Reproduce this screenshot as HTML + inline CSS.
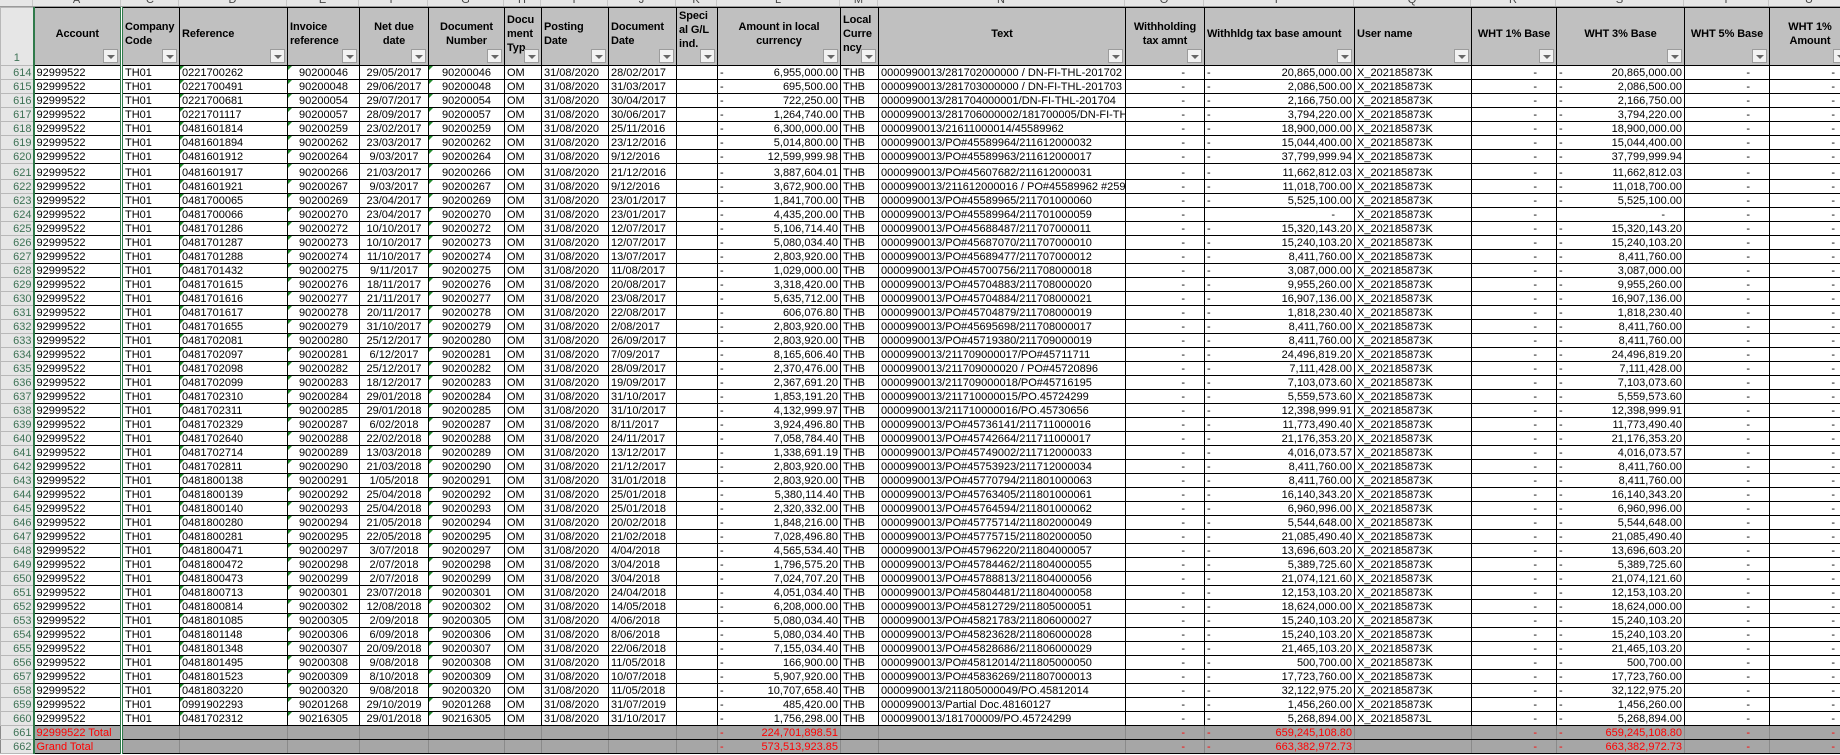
<!DOCTYPE html>
<html><head><meta charset="utf-8"><style>
*{box-sizing:border-box}
body{margin:0;width:1840px;height:755px;overflow:hidden;background:#fff;font-family:"Liberation Sans",Arial,sans-serif;font-size:11px;color:#000;position:relative}
.let{position:absolute;top:0;left:0;height:7px;width:1850px;background:#e6e6e6;overflow:hidden;border-bottom:1px solid #9a9a9a}
.let span{position:absolute;top:-6px;font-size:11px;color:#444;text-align:center;border-right:1px solid #c8c8c8;height:14px}
table{position:absolute;top:7px;left:0;border-collapse:collapse;table-layout:fixed;width:1850px}
td{border:1px solid #000;padding:0 2px;white-space:nowrap;overflow:hidden;line-height:12px;height:14px;vertical-align:bottom}
td:first-child{background:#e6e6e6;color:#3d7255;text-align:right;border-color:#b8b8b8;border-right:1px solid #9a9a9a;padding:0 1px 0 0}
td:nth-child(2){border-left:2px solid #2f7a4a}
td:nth-child(3){border-left:3px double #2f7a4a}
thead td{background:#c0c0c0;font-weight:bold;white-space:normal;line-height:14px;height:58px;vertical-align:middle;position:relative;padding:0 2px 6px 2px;letter-spacing:-0.1px}
thead td:first-child{vertical-align:bottom;font-weight:normal;text-align:center;padding:0}
thead td.c{text-align:center}
.fb{position:absolute;right:2px;bottom:2px;width:15px;height:14px;background:#f2f2f2;border:1px solid #9c9c9c}
.fb:after{content:"";position:absolute;left:3px;top:5px;border-left:4px solid transparent;border-right:4px solid transparent;border-top:4px solid #666}
tbody td:nth-child(5),tbody td:nth-child(6),tbody td:nth-child(7){text-align:center}
tbody td:nth-child(12),tbody td:nth-child(16),tbody td:nth-child(19){text-align:right}
tbody td:nth-child(15),tbody td:nth-child(18),tbody td:nth-child(20){text-align:right;padding-right:19px}
tbody td:nth-child(21){text-align:right;padding-right:15px}
i{font-style:normal;float:left}
tbody tr.d td:nth-child(4),tbody tr.d td:nth-child(5),tbody tr.d td:nth-child(7){position:relative}
tbody tr.d td:nth-child(4):before,tbody tr.d td:nth-child(5):before,tbody tr.d td:nth-child(7):before{content:"";position:absolute;left:0;top:0;border-top:4px solid #1f8a2a;border-right:4px solid transparent}
tr.t td{background:#a6a6a6;color:#f00;border-left-color:#8a8a8a;border-right-color:#8a8a8a}
tr.t td:first-child{background:#e6e6e6;color:#3d7255}
tr.t td:nth-child(2){border-left:2px solid #2f7a4a}
tr.t td:nth-child(3){border-left:3px double #2f7a4a}
</style></head><body>
<div class="let">
<span style="left:0;width:33px"></span><span style="left:33px;width:88px">A</span><span style="left:122px;width:57px">C</span><span style="left:179px;width:108px">D</span><span style="left:287px;width:72px">E</span><span style="left:359px;width:69px">F</span><span style="left:428px;width:76px">G</span><span style="left:504px;width:37px">H</span><span style="left:541px;width:67px">I</span><span style="left:608px;width:68px">J</span><span style="left:676px;width:41px">K</span><span style="left:717px;width:123px">L</span><span style="left:840px;width:38px">M</span><span style="left:878px;width:247px">N</span><span style="left:1125px;width:79px">O</span><span style="left:1204px;width:150px">P</span><span style="left:1354px;width:117px">Q</span><span style="left:1471px;width:85px">R</span><span style="left:1556px;width:128px">S</span><span style="left:1684px;width:85px">T</span><span style="left:1769px;width:81px">U</span>
</div>
<table>
<colgroup><col style="width:33px"><col style="width:88px"><col style="width:58px"><col style="width:108px"><col style="width:72px"><col style="width:69px"><col style="width:76px"><col style="width:37px"><col style="width:67px"><col style="width:68px"><col style="width:41px"><col style="width:123px"><col style="width:38px"><col style="width:247px"><col style="width:79px"><col style="width:150px"><col style="width:117px"><col style="width:85px"><col style="width:128px"><col style="width:85px"><col style="width:81px"></colgroup>
<thead><tr>
<td>1</td>
<td class="c">Account<div class="fb"></div></td>
<td>Company Code<div class="fb"></div></td>
<td>Reference<div class="fb"></div></td>
<td>Invoice reference<div class="fb"></div></td>
<td class="c">Net due date<div class="fb"></div></td>
<td class="c">Document Number<div class="fb"></div></td>
<td>Docu ment Typ<div class="fb"></div></td>
<td>Posting Date<div class="fb"></div></td>
<td>Document Date<div class="fb"></div></td>
<td style="padding-bottom:14px">Speci al G/L ind.<div class="fb"></div></td>
<td class="c">Amount in local currency<div class="fb"></div></td>
<td>Local Curre ncy<div class="fb"></div></td>
<td class="c">Text<div class="fb"></div></td>
<td class="c">Withholding tax amnt<div class="fb"></div></td>
<td>Withhldg tax base amount<div class="fb"></div></td>
<td>User name<div class="fb"></div></td>
<td class="c">WHT 1% Base<div class="fb"></div></td>
<td class="c">WHT 3% Base<div class="fb"></div></td>
<td class="c">WHT 5% Base<div class="fb"></div></td>
<td class="c">WHT 1% Amount<div class="fb"></div></td>
</tr></thead>
<tbody>
<tr class="d"><td>614</td><td>92999522</td><td>TH01</td><td>0221700262</td><td>90200046</td><td>29/05/2017</td><td>90200046</td><td>OM</td><td>31/08/2020</td><td>28/02/2017</td><td></td><td><i>-</i>6,955,000.00</td><td>THB</td><td>0000990013/281702000000 / DN-FI-THL-201702</td><td>-</td><td><i>-</i>20,865,000.00</td><td>X_202185873K</td><td>-</td><td><i>-</i>20,865,000.00</td><td>-</td><td>-</td></tr>
<tr class="d"><td>615</td><td>92999522</td><td>TH01</td><td>0221700491</td><td>90200048</td><td>29/06/2017</td><td>90200048</td><td>OM</td><td>31/08/2020</td><td>31/03/2017</td><td></td><td><i>-</i>695,500.00</td><td>THB</td><td>0000990013/281703000000 / DN-FI-THL-201703</td><td>-</td><td><i>-</i>2,086,500.00</td><td>X_202185873K</td><td>-</td><td><i>-</i>2,086,500.00</td><td>-</td><td>-</td></tr>
<tr class="d"><td>616</td><td>92999522</td><td>TH01</td><td>0221700681</td><td>90200054</td><td>29/07/2017</td><td>90200054</td><td>OM</td><td>31/08/2020</td><td>30/04/2017</td><td></td><td><i>-</i>722,250.00</td><td>THB</td><td>0000990013/281704000001/DN-FI-THL-201704</td><td>-</td><td><i>-</i>2,166,750.00</td><td>X_202185873K</td><td>-</td><td><i>-</i>2,166,750.00</td><td>-</td><td>-</td></tr>
<tr class="d"><td>617</td><td>92999522</td><td>TH01</td><td>0221701117</td><td>90200057</td><td>28/09/2017</td><td>90200057</td><td>OM</td><td>31/08/2020</td><td>30/06/2017</td><td></td><td><i>-</i>1,264,740.00</td><td>THB</td><td>0000990013/281706000002/181700005/DN-FI-THL</td><td>-</td><td><i>-</i>3,794,220.00</td><td>X_202185873K</td><td>-</td><td><i>-</i>3,794,220.00</td><td>-</td><td>-</td></tr>
<tr class="d"><td>618</td><td>92999522</td><td>TH01</td><td>0481601814</td><td>90200259</td><td>23/02/2017</td><td>90200259</td><td>OM</td><td>31/08/2020</td><td>25/11/2016</td><td></td><td><i>-</i>6,300,000.00</td><td>THB</td><td>0000990013/21611000014/45589962</td><td>-</td><td><i>-</i>18,900,000.00</td><td>X_202185873K</td><td>-</td><td><i>-</i>18,900,000.00</td><td>-</td><td>-</td></tr>
<tr class="d"><td>619</td><td>92999522</td><td>TH01</td><td>0481601894</td><td>90200262</td><td>23/03/2017</td><td>90200262</td><td>OM</td><td>31/08/2020</td><td>23/12/2016</td><td></td><td><i>-</i>5,014,800.00</td><td>THB</td><td>0000990013/PO#45589964/211612000032</td><td>-</td><td><i>-</i>15,044,400.00</td><td>X_202185873K</td><td>-</td><td><i>-</i>15,044,400.00</td><td>-</td><td>-</td></tr>
<tr class="d"><td>620</td><td>92999522</td><td>TH01</td><td>0481601912</td><td>90200264</td><td>9/03/2017</td><td>90200264</td><td>OM</td><td>31/08/2020</td><td>9/12/2016</td><td></td><td><i>-</i>12,599,999.98</td><td>THB</td><td>0000990013/PO#45589963/211612000017</td><td>-</td><td><i>-</i>37,799,999.94</td><td>X_202185873K</td><td>-</td><td><i>-</i>37,799,999.94</td><td>-</td><td>-</td></tr>
<tr class="d" style="height:16px"><td style="height:16px">621</td><td>92999522</td><td>TH01</td><td>0481601917</td><td>90200266</td><td>21/03/2017</td><td>90200266</td><td>OM</td><td>31/08/2020</td><td>21/12/2016</td><td></td><td><i>-</i>3,887,604.01</td><td>THB</td><td>0000990013/PO#45607682/211612000031</td><td>-</td><td><i>-</i>11,662,812.03</td><td>X_202185873K</td><td>-</td><td><i>-</i>11,662,812.03</td><td>-</td><td>-</td></tr>
<tr class="d"><td>622</td><td>92999522</td><td>TH01</td><td>0481601921</td><td>90200267</td><td>9/03/2017</td><td>90200267</td><td>OM</td><td>31/08/2020</td><td>9/12/2016</td><td></td><td><i>-</i>3,672,900.00</td><td>THB</td><td>0000990013/211612000016 / PO#45589962 #2595</td><td>-</td><td><i>-</i>11,018,700.00</td><td>X_202185873K</td><td>-</td><td><i>-</i>11,018,700.00</td><td>-</td><td>-</td></tr>
<tr class="d"><td>623</td><td>92999522</td><td>TH01</td><td>0481700065</td><td>90200269</td><td>23/04/2017</td><td>90200269</td><td>OM</td><td>31/08/2020</td><td>23/01/2017</td><td></td><td><i>-</i>1,841,700.00</td><td>THB</td><td>0000990013/PO#45589965/211701000060</td><td>-</td><td><i>-</i>5,525,100.00</td><td>X_202185873K</td><td>-</td><td><i>-</i>5,525,100.00</td><td>-</td><td>-</td></tr>
<tr class="d"><td>624</td><td>92999522</td><td>TH01</td><td>0481700066</td><td>90200270</td><td>23/04/2017</td><td>90200270</td><td>OM</td><td>31/08/2020</td><td>23/01/2017</td><td></td><td><i>-</i>4,435,200.00</td><td>THB</td><td>0000990013/PO#45589964/211701000059</td><td>-</td><td style="padding-right:19px">-</td><td>X_202185873K</td><td>-</td><td style="padding-right:19px">-</td><td>-</td><td>-</td></tr>
<tr class="d"><td>625</td><td>92999522</td><td>TH01</td><td>0481701286</td><td>90200272</td><td>10/10/2017</td><td>90200272</td><td>OM</td><td>31/08/2020</td><td>12/07/2017</td><td></td><td><i>-</i>5,106,714.40</td><td>THB</td><td>0000990013/PO#45688487/211707000011</td><td>-</td><td><i>-</i>15,320,143.20</td><td>X_202185873K</td><td>-</td><td><i>-</i>15,320,143.20</td><td>-</td><td>-</td></tr>
<tr class="d"><td>626</td><td>92999522</td><td>TH01</td><td>0481701287</td><td>90200273</td><td>10/10/2017</td><td>90200273</td><td>OM</td><td>31/08/2020</td><td>12/07/2017</td><td></td><td><i>-</i>5,080,034.40</td><td>THB</td><td>0000990013/PO#45687070/211707000010</td><td>-</td><td><i>-</i>15,240,103.20</td><td>X_202185873K</td><td>-</td><td><i>-</i>15,240,103.20</td><td>-</td><td>-</td></tr>
<tr class="d"><td>627</td><td>92999522</td><td>TH01</td><td>0481701288</td><td>90200274</td><td>11/10/2017</td><td>90200274</td><td>OM</td><td>31/08/2020</td><td>13/07/2017</td><td></td><td><i>-</i>2,803,920.00</td><td>THB</td><td>0000990013/PO#45689477/211707000012</td><td>-</td><td><i>-</i>8,411,760.00</td><td>X_202185873K</td><td>-</td><td><i>-</i>8,411,760.00</td><td>-</td><td>-</td></tr>
<tr class="d"><td>628</td><td>92999522</td><td>TH01</td><td>0481701432</td><td>90200275</td><td>9/11/2017</td><td>90200275</td><td>OM</td><td>31/08/2020</td><td>11/08/2017</td><td></td><td><i>-</i>1,029,000.00</td><td>THB</td><td>0000990013/PO#45700756/211708000018</td><td>-</td><td><i>-</i>3,087,000.00</td><td>X_202185873K</td><td>-</td><td><i>-</i>3,087,000.00</td><td>-</td><td>-</td></tr>
<tr class="d"><td>629</td><td>92999522</td><td>TH01</td><td>0481701615</td><td>90200276</td><td>18/11/2017</td><td>90200276</td><td>OM</td><td>31/08/2020</td><td>20/08/2017</td><td></td><td><i>-</i>3,318,420.00</td><td>THB</td><td>0000990013/PO#45704883/211708000020</td><td>-</td><td><i>-</i>9,955,260.00</td><td>X_202185873K</td><td>-</td><td><i>-</i>9,955,260.00</td><td>-</td><td>-</td></tr>
<tr class="d"><td>630</td><td>92999522</td><td>TH01</td><td>0481701616</td><td>90200277</td><td>21/11/2017</td><td>90200277</td><td>OM</td><td>31/08/2020</td><td>23/08/2017</td><td></td><td><i>-</i>5,635,712.00</td><td>THB</td><td>0000990013/PO#45704884/211708000021</td><td>-</td><td><i>-</i>16,907,136.00</td><td>X_202185873K</td><td>-</td><td><i>-</i>16,907,136.00</td><td>-</td><td>-</td></tr>
<tr class="d"><td>631</td><td>92999522</td><td>TH01</td><td>0481701617</td><td>90200278</td><td>20/11/2017</td><td>90200278</td><td>OM</td><td>31/08/2020</td><td>22/08/2017</td><td></td><td><i>-</i>606,076.80</td><td>THB</td><td>0000990013/PO#45704879/211708000019</td><td>-</td><td><i>-</i>1,818,230.40</td><td>X_202185873K</td><td>-</td><td><i>-</i>1,818,230.40</td><td>-</td><td>-</td></tr>
<tr class="d"><td>632</td><td>92999522</td><td>TH01</td><td>0481701655</td><td>90200279</td><td>31/10/2017</td><td>90200279</td><td>OM</td><td>31/08/2020</td><td>2/08/2017</td><td></td><td><i>-</i>2,803,920.00</td><td>THB</td><td>0000990013/PO#45695698/211708000017</td><td>-</td><td><i>-</i>8,411,760.00</td><td>X_202185873K</td><td>-</td><td><i>-</i>8,411,760.00</td><td>-</td><td>-</td></tr>
<tr class="d"><td>633</td><td>92999522</td><td>TH01</td><td>0481702081</td><td>90200280</td><td>25/12/2017</td><td>90200280</td><td>OM</td><td>31/08/2020</td><td>26/09/2017</td><td></td><td><i>-</i>2,803,920.00</td><td>THB</td><td>0000990013/PO#45719380/211709000019</td><td>-</td><td><i>-</i>8,411,760.00</td><td>X_202185873K</td><td>-</td><td><i>-</i>8,411,760.00</td><td>-</td><td>-</td></tr>
<tr class="d"><td>634</td><td>92999522</td><td>TH01</td><td>0481702097</td><td>90200281</td><td>6/12/2017</td><td>90200281</td><td>OM</td><td>31/08/2020</td><td>7/09/2017</td><td></td><td><i>-</i>8,165,606.40</td><td>THB</td><td>0000990013/211709000017/PO#45711711</td><td>-</td><td><i>-</i>24,496,819.20</td><td>X_202185873K</td><td>-</td><td><i>-</i>24,496,819.20</td><td>-</td><td>-</td></tr>
<tr class="d"><td>635</td><td>92999522</td><td>TH01</td><td>0481702098</td><td>90200282</td><td>25/12/2017</td><td>90200282</td><td>OM</td><td>31/08/2020</td><td>28/09/2017</td><td></td><td><i>-</i>2,370,476.00</td><td>THB</td><td>0000990013/211709000020 / PO#45720896</td><td>-</td><td><i>-</i>7,111,428.00</td><td>X_202185873K</td><td>-</td><td><i>-</i>7,111,428.00</td><td>-</td><td>-</td></tr>
<tr class="d"><td>636</td><td>92999522</td><td>TH01</td><td>0481702099</td><td>90200283</td><td>18/12/2017</td><td>90200283</td><td>OM</td><td>31/08/2020</td><td>19/09/2017</td><td></td><td><i>-</i>2,367,691.20</td><td>THB</td><td>0000990013/211709000018/PO#45716195</td><td>-</td><td><i>-</i>7,103,073.60</td><td>X_202185873K</td><td>-</td><td><i>-</i>7,103,073.60</td><td>-</td><td>-</td></tr>
<tr class="d"><td>637</td><td>92999522</td><td>TH01</td><td>0481702310</td><td>90200284</td><td>29/01/2018</td><td>90200284</td><td>OM</td><td>31/08/2020</td><td>31/10/2017</td><td></td><td><i>-</i>1,853,191.20</td><td>THB</td><td>0000990013/211710000015/PO.45724299</td><td>-</td><td><i>-</i>5,559,573.60</td><td>X_202185873K</td><td>-</td><td><i>-</i>5,559,573.60</td><td>-</td><td>-</td></tr>
<tr class="d"><td>638</td><td>92999522</td><td>TH01</td><td>0481702311</td><td>90200285</td><td>29/01/2018</td><td>90200285</td><td>OM</td><td>31/08/2020</td><td>31/10/2017</td><td></td><td><i>-</i>4,132,999.97</td><td>THB</td><td>0000990013/211710000016/PO.45730656</td><td>-</td><td><i>-</i>12,398,999.91</td><td>X_202185873K</td><td>-</td><td><i>-</i>12,398,999.91</td><td>-</td><td>-</td></tr>
<tr class="d"><td>639</td><td>92999522</td><td>TH01</td><td>0481702329</td><td>90200287</td><td>6/02/2018</td><td>90200287</td><td>OM</td><td>31/08/2020</td><td>8/11/2017</td><td></td><td><i>-</i>3,924,496.80</td><td>THB</td><td>0000990013/PO#45736141/211711000016</td><td>-</td><td><i>-</i>11,773,490.40</td><td>X_202185873K</td><td>-</td><td><i>-</i>11,773,490.40</td><td>-</td><td>-</td></tr>
<tr class="d"><td>640</td><td>92999522</td><td>TH01</td><td>0481702640</td><td>90200288</td><td>22/02/2018</td><td>90200288</td><td>OM</td><td>31/08/2020</td><td>24/11/2017</td><td></td><td><i>-</i>7,058,784.40</td><td>THB</td><td>0000990013/PO#45742664/211711000017</td><td>-</td><td><i>-</i>21,176,353.20</td><td>X_202185873K</td><td>-</td><td><i>-</i>21,176,353.20</td><td>-</td><td>-</td></tr>
<tr class="d"><td>641</td><td>92999522</td><td>TH01</td><td>0481702714</td><td>90200289</td><td>13/03/2018</td><td>90200289</td><td>OM</td><td>31/08/2020</td><td>13/12/2017</td><td></td><td><i>-</i>1,338,691.19</td><td>THB</td><td>0000990013/PO#45749002/211712000033</td><td>-</td><td><i>-</i>4,016,073.57</td><td>X_202185873K</td><td>-</td><td><i>-</i>4,016,073.57</td><td>-</td><td>-</td></tr>
<tr class="d"><td>642</td><td>92999522</td><td>TH01</td><td>0481702811</td><td>90200290</td><td>21/03/2018</td><td>90200290</td><td>OM</td><td>31/08/2020</td><td>21/12/2017</td><td></td><td><i>-</i>2,803,920.00</td><td>THB</td><td>0000990013/PO#45753923/211712000034</td><td>-</td><td><i>-</i>8,411,760.00</td><td>X_202185873K</td><td>-</td><td><i>-</i>8,411,760.00</td><td>-</td><td>-</td></tr>
<tr class="d"><td>643</td><td>92999522</td><td>TH01</td><td>0481800138</td><td>90200291</td><td>1/05/2018</td><td>90200291</td><td>OM</td><td>31/08/2020</td><td>31/01/2018</td><td></td><td><i>-</i>2,803,920.00</td><td>THB</td><td>0000990013/PO#45770794/211801000063</td><td>-</td><td><i>-</i>8,411,760.00</td><td>X_202185873K</td><td>-</td><td><i>-</i>8,411,760.00</td><td>-</td><td>-</td></tr>
<tr class="d"><td>644</td><td>92999522</td><td>TH01</td><td>0481800139</td><td>90200292</td><td>25/04/2018</td><td>90200292</td><td>OM</td><td>31/08/2020</td><td>25/01/2018</td><td></td><td><i>-</i>5,380,114.40</td><td>THB</td><td>0000990013/PO#45763405/211801000061</td><td>-</td><td><i>-</i>16,140,343.20</td><td>X_202185873K</td><td>-</td><td><i>-</i>16,140,343.20</td><td>-</td><td>-</td></tr>
<tr class="d"><td>645</td><td>92999522</td><td>TH01</td><td>0481800140</td><td>90200293</td><td>25/04/2018</td><td>90200293</td><td>OM</td><td>31/08/2020</td><td>25/01/2018</td><td></td><td><i>-</i>2,320,332.00</td><td>THB</td><td>0000990013/PO#45764594/211801000062</td><td>-</td><td><i>-</i>6,960,996.00</td><td>X_202185873K</td><td>-</td><td><i>-</i>6,960,996.00</td><td>-</td><td>-</td></tr>
<tr class="d"><td>646</td><td>92999522</td><td>TH01</td><td>0481800280</td><td>90200294</td><td>21/05/2018</td><td>90200294</td><td>OM</td><td>31/08/2020</td><td>20/02/2018</td><td></td><td><i>-</i>1,848,216.00</td><td>THB</td><td>0000990013/PO#45775714/211802000049</td><td>-</td><td><i>-</i>5,544,648.00</td><td>X_202185873K</td><td>-</td><td><i>-</i>5,544,648.00</td><td>-</td><td>-</td></tr>
<tr class="d"><td>647</td><td>92999522</td><td>TH01</td><td>0481800281</td><td>90200295</td><td>22/05/2018</td><td>90200295</td><td>OM</td><td>31/08/2020</td><td>21/02/2018</td><td></td><td><i>-</i>7,028,496.80</td><td>THB</td><td>0000990013/PO#45775715/211802000050</td><td>-</td><td><i>-</i>21,085,490.40</td><td>X_202185873K</td><td>-</td><td><i>-</i>21,085,490.40</td><td>-</td><td>-</td></tr>
<tr class="d"><td>648</td><td>92999522</td><td>TH01</td><td>0481800471</td><td>90200297</td><td>3/07/2018</td><td>90200297</td><td>OM</td><td>31/08/2020</td><td>4/04/2018</td><td></td><td><i>-</i>4,565,534.40</td><td>THB</td><td>0000990013/PO#45796220/211804000057</td><td>-</td><td><i>-</i>13,696,603.20</td><td>X_202185873K</td><td>-</td><td><i>-</i>13,696,603.20</td><td>-</td><td>-</td></tr>
<tr class="d"><td>649</td><td>92999522</td><td>TH01</td><td>0481800472</td><td>90200298</td><td>2/07/2018</td><td>90200298</td><td>OM</td><td>31/08/2020</td><td>3/04/2018</td><td></td><td><i>-</i>1,796,575.20</td><td>THB</td><td>0000990013/PO#45784462/211804000055</td><td>-</td><td><i>-</i>5,389,725.60</td><td>X_202185873K</td><td>-</td><td><i>-</i>5,389,725.60</td><td>-</td><td>-</td></tr>
<tr class="d"><td>650</td><td>92999522</td><td>TH01</td><td>0481800473</td><td>90200299</td><td>2/07/2018</td><td>90200299</td><td>OM</td><td>31/08/2020</td><td>3/04/2018</td><td></td><td><i>-</i>7,024,707.20</td><td>THB</td><td>0000990013/PO#45788813/211804000056</td><td>-</td><td><i>-</i>21,074,121.60</td><td>X_202185873K</td><td>-</td><td><i>-</i>21,074,121.60</td><td>-</td><td>-</td></tr>
<tr class="d"><td>651</td><td>92999522</td><td>TH01</td><td>0481800713</td><td>90200301</td><td>23/07/2018</td><td>90200301</td><td>OM</td><td>31/08/2020</td><td>24/04/2018</td><td></td><td><i>-</i>4,051,034.40</td><td>THB</td><td>0000990013/PO#45804481/211804000058</td><td>-</td><td><i>-</i>12,153,103.20</td><td>X_202185873K</td><td>-</td><td><i>-</i>12,153,103.20</td><td>-</td><td>-</td></tr>
<tr class="d"><td>652</td><td>92999522</td><td>TH01</td><td>0481800814</td><td>90200302</td><td>12/08/2018</td><td>90200302</td><td>OM</td><td>31/08/2020</td><td>14/05/2018</td><td></td><td><i>-</i>6,208,000.00</td><td>THB</td><td>0000990013/PO#45812729/211805000051</td><td>-</td><td><i>-</i>18,624,000.00</td><td>X_202185873K</td><td>-</td><td><i>-</i>18,624,000.00</td><td>-</td><td>-</td></tr>
<tr class="d"><td>653</td><td>92999522</td><td>TH01</td><td>0481801085</td><td>90200305</td><td>2/09/2018</td><td>90200305</td><td>OM</td><td>31/08/2020</td><td>4/06/2018</td><td></td><td><i>-</i>5,080,034.40</td><td>THB</td><td>0000990013/PO#45821783/211806000027</td><td>-</td><td><i>-</i>15,240,103.20</td><td>X_202185873K</td><td>-</td><td><i>-</i>15,240,103.20</td><td>-</td><td>-</td></tr>
<tr class="d"><td>654</td><td>92999522</td><td>TH01</td><td>0481801148</td><td>90200306</td><td>6/09/2018</td><td>90200306</td><td>OM</td><td>31/08/2020</td><td>8/06/2018</td><td></td><td><i>-</i>5,080,034.40</td><td>THB</td><td>0000990013/PO#45823628/211806000028</td><td>-</td><td><i>-</i>15,240,103.20</td><td>X_202185873K</td><td>-</td><td><i>-</i>15,240,103.20</td><td>-</td><td>-</td></tr>
<tr class="d"><td>655</td><td>92999522</td><td>TH01</td><td>0481801348</td><td>90200307</td><td>20/09/2018</td><td>90200307</td><td>OM</td><td>31/08/2020</td><td>22/06/2018</td><td></td><td><i>-</i>7,155,034.40</td><td>THB</td><td>0000990013/PO#45828686/211806000029</td><td>-</td><td><i>-</i>21,465,103.20</td><td>X_202185873K</td><td>-</td><td><i>-</i>21,465,103.20</td><td>-</td><td>-</td></tr>
<tr class="d"><td>656</td><td>92999522</td><td>TH01</td><td>0481801495</td><td>90200308</td><td>9/08/2018</td><td>90200308</td><td>OM</td><td>31/08/2020</td><td>11/05/2018</td><td></td><td><i>-</i>166,900.00</td><td>THB</td><td>0000990013/PO#45812014/211805000050</td><td>-</td><td><i>-</i>500,700.00</td><td>X_202185873K</td><td>-</td><td><i>-</i>500,700.00</td><td>-</td><td>-</td></tr>
<tr class="d"><td>657</td><td>92999522</td><td>TH01</td><td>0481801523</td><td>90200309</td><td>8/10/2018</td><td>90200309</td><td>OM</td><td>31/08/2020</td><td>10/07/2018</td><td></td><td><i>-</i>5,907,920.00</td><td>THB</td><td>0000990013/PO#45836269/211807000013</td><td>-</td><td><i>-</i>17,723,760.00</td><td>X_202185873K</td><td>-</td><td><i>-</i>17,723,760.00</td><td>-</td><td>-</td></tr>
<tr class="d"><td>658</td><td>92999522</td><td>TH01</td><td>0481803220</td><td>90200320</td><td>9/08/2018</td><td>90200320</td><td>OM</td><td>31/08/2020</td><td>11/05/2018</td><td></td><td><i>-</i>10,707,658.40</td><td>THB</td><td>0000990013/211805000049/PO.45812014</td><td>-</td><td><i>-</i>32,122,975.20</td><td>X_202185873K</td><td>-</td><td><i>-</i>32,122,975.20</td><td>-</td><td>-</td></tr>
<tr class="d"><td>659</td><td>92999522</td><td>TH01</td><td>0991902293</td><td>90201268</td><td>29/10/2019</td><td>90201268</td><td>OM</td><td>31/08/2020</td><td>31/07/2019</td><td></td><td><i>-</i>485,420.00</td><td>THB</td><td>0000990013/Partial Doc.48160127</td><td>-</td><td><i>-</i>1,456,260.00</td><td>X_202185873K</td><td>-</td><td><i>-</i>1,456,260.00</td><td>-</td><td>-</td></tr>
<tr class="d"><td>660</td><td>92999522</td><td>TH01</td><td>0481702312</td><td>90216305</td><td>29/01/2018</td><td>90216305</td><td>OM</td><td>31/08/2020</td><td>31/10/2017</td><td></td><td><i>-</i>1,756,298.00</td><td>THB</td><td>0000990013/181700009/PO.45724299</td><td>-</td><td><i>-</i>5,268,894.00</td><td>X_202185873L</td><td>-</td><td><i>-</i>5,268,894.00</td><td>-</td><td>-</td></tr>
<tr class="t"><td>661</td><td>92999522 Total</td><td></td><td></td><td></td><td></td><td></td><td></td><td></td><td></td><td></td><td><i>-</i>224,701,898.51</td><td></td><td></td><td>-</td><td><i>-</i>659,245,108.80</td><td></td><td>-</td><td><i>-</i>659,245,108.80</td><td>-</td><td>-</td></tr>
<tr class="t"><td>662</td><td>Grand Total</td><td></td><td></td><td></td><td></td><td></td><td></td><td></td><td></td><td></td><td><i>-</i>573,513,923.85</td><td></td><td></td><td>-</td><td><i>-</i>663,382,972.73</td><td></td><td>-</td><td><i>-</i>663,382,972.73</td><td>-</td><td>-</td></tr>
</tbody></table>
</body></html>
